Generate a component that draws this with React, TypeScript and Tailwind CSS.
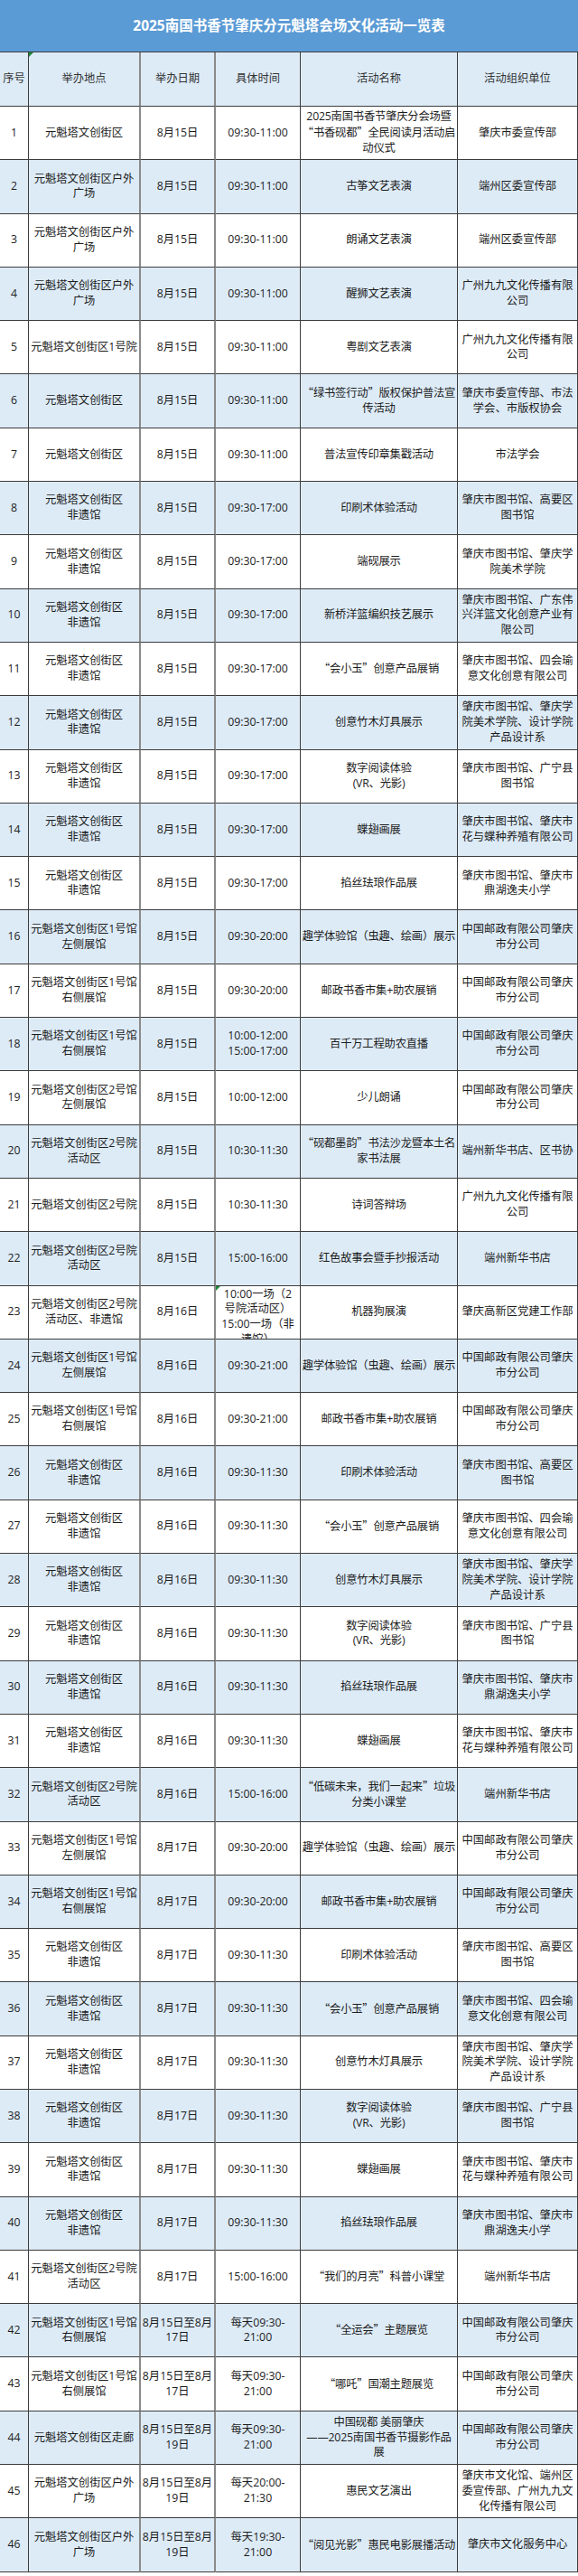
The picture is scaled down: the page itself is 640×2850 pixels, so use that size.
import React from 'react';

type Row = {
  place: string;
  date: string;
  time: string;
  name: string;
  org: string;
};

const FY = '非遗馆';
const ZQ_POST = '中国邮政有限公司肇庆\n市分公司';

const rows: Row[] = [
  { place: '元魁塔文创街区', date: '8月15日', time: '09:30-11:00', name: '2025南国书香节肇庆分会场暨\n“书香砚都”全民阅读月活动启\n动仪式', org: '肇庆市委宣传部' },
  { place: '元魁塔文创街区户外\n广场', date: '8月15日', time: '09:30-11:00', name: '古筝文艺表演', org: '端州区委宣传部' },
  { place: '元魁塔文创街区户外\n广场', date: '8月15日', time: '09:30-11:00', name: '朗诵文艺表演', org: '端州区委宣传部' },
  { place: '元魁塔文创街区户外\n广场', date: '8月15日', time: '09:30-11:00', name: '醒狮文艺表演', org: '广州九九文化传播有限\n公司' },
  { place: '元魁塔文创街区1号院', date: '8月15日', time: '09:30-11:00', name: '粤剧文艺表演', org: '广州九九文化传播有限\n公司' },
  { place: '元魁塔文创街区', date: '8月15日', time: '09:30-11:00', name: '“绿书签行动”版权保护普法宣\n传活动', org: '肇庆市委宣传部、市法\n学会、市版权协会' },
  { place: '元魁塔文创街区', date: '8月15日', time: '09:30-11:00', name: '普法宣传印章集戳活动', org: '市法学会' },
  { place: '元魁塔文创街区\n' + FY, date: '8月15日', time: '09:30-17:00', name: '印刷术体验活动', org: '肇庆市图书馆、高要区\n图书馆' },
  { place: '元魁塔文创街区\n' + FY, date: '8月15日', time: '09:30-17:00', name: '端砚展示', org: '肇庆市图书馆、肇庆学\n院美术学院' },
  { place: '元魁塔文创街区\n' + FY, date: '8月15日', time: '09:30-17:00', name: '新桥洋篮编织技艺展示', org: '肇庆市图书馆、广东伟\n兴洋篮文化创意产业有\n限公司' },
  { place: '元魁塔文创街区\n' + FY, date: '8月15日', time: '09:30-17:00', name: '“会小玉”创意产品展销', org: '肇庆市图书馆、四会瑜\n意文化创意有限公司' },
  { place: '元魁塔文创街区\n' + FY, date: '8月15日', time: '09:30-17:00', name: '创意竹木灯具展示', org: '肇庆市图书馆、肇庆学\n院美术学院、设计学院\n产品设计系' },
  { place: '元魁塔文创街区\n' + FY, date: '8月15日', time: '09:30-17:00', name: '数字阅读体验\n(VR、光影)', org: '肇庆市图书馆、广宁县\n图书馆' },
  { place: '元魁塔文创街区\n' + FY, date: '8月15日', time: '09:30-17:00', name: '蝶翅画展', org: '肇庆市图书馆、肇庆市\n花与蝶种养殖有限公司' },
  { place: '元魁塔文创街区\n' + FY, date: '8月15日', time: '09:30-17:00', name: '掐丝珐琅作品展', org: '肇庆市图书馆、肇庆市\n鼎湖逸夫小学' },
  { place: '元魁塔文创街区1号馆\n左侧展馆', date: '8月15日', time: '09:30-20:00', name: '趣学体验馆（虫趣、绘画）展示', org: ZQ_POST },
  { place: '元魁塔文创街区1号馆\n右侧展馆', date: '8月15日', time: '09:30-20:00', name: '邮政书香市集+助农展销', org: ZQ_POST },
  { place: '元魁塔文创街区1号馆\n右侧展馆', date: '8月15日', time: '10:00-12:00\n15:00-17:00', name: '百千万工程助农直播', org: ZQ_POST },
  { place: '元魁塔文创街区2号馆\n左侧展馆', date: '8月15日', time: '10:00-12:00', name: '少儿朗诵', org: ZQ_POST },
  { place: '元魁塔文创街区2号院\n活动区', date: '8月15日', time: '10:30-11:30', name: '“砚都墨韵”书法沙龙暨本土名\n家书法展', org: '端州新华书店、区书协' },
  { place: '元魁塔文创街区2号院', date: '8月15日', time: '10:30-11:30', name: '诗词答辩场', org: '广州九九文化传播有限\n公司' },
  { place: '元魁塔文创街区2号院\n活动区', date: '8月15日', time: '15:00-16:00', name: '红色故事会暨手抄报活动', org: '端州新华书店' },
  { place: '元魁塔文创街区2号院\n活动区、非遗馆', date: '8月16日', time: '10:00一场（2\n号院活动区）\n15:00一场（非\n遗馆）', name: '机器狗展演', org: '肇庆高新区党建工作部' },
  { place: '元魁塔文创街区1号馆\n左侧展馆', date: '8月16日', time: '09:30-21:00', name: '趣学体验馆（虫趣、绘画）展示', org: ZQ_POST },
  { place: '元魁塔文创街区1号馆\n右侧展馆', date: '8月16日', time: '09:30-21:00', name: '邮政书香市集+助农展销', org: ZQ_POST },
  { place: '元魁塔文创街区\n' + FY, date: '8月16日', time: '09:30-11:30', name: '印刷术体验活动', org: '肇庆市图书馆、高要区\n图书馆' },
  { place: '元魁塔文创街区\n' + FY, date: '8月16日', time: '09:30-11:30', name: '“会小玉”创意产品展销', org: '肇庆市图书馆、四会瑜\n意文化创意有限公司' },
  { place: '元魁塔文创街区\n' + FY, date: '8月16日', time: '09:30-11:30', name: '创意竹木灯具展示', org: '肇庆市图书馆、肇庆学\n院美术学院、设计学院\n产品设计系' },
  { place: '元魁塔文创街区\n' + FY, date: '8月16日', time: '09:30-11:30', name: '数字阅读体验\n(VR、光影)', org: '肇庆市图书馆、广宁县\n图书馆' },
  { place: '元魁塔文创街区\n' + FY, date: '8月16日', time: '09:30-11:30', name: '掐丝珐琅作品展', org: '肇庆市图书馆、肇庆市\n鼎湖逸夫小学' },
  { place: '元魁塔文创街区\n' + FY, date: '8月16日', time: '09:30-11:30', name: '蝶翅画展', org: '肇庆市图书馆、肇庆市\n花与蝶种养殖有限公司' },
  { place: '元魁塔文创街区2号院\n活动区', date: '8月16日', time: '15:00-16:00', name: '“低碳未来，我们一起来”垃圾\n分类小课堂', org: '端州新华书店' },
  { place: '元魁塔文创街区1号馆\n左侧展馆', date: '8月17日', time: '09:30-20:00', name: '趣学体验馆（虫趣、绘画）展示', org: ZQ_POST },
  { place: '元魁塔文创街区1号馆\n右侧展馆', date: '8月17日', time: '09:30-20:00', name: '邮政书香市集+助农展销', org: ZQ_POST },
  { place: '元魁塔文创街区\n' + FY, date: '8月17日', time: '09:30-11:30', name: '印刷术体验活动', org: '肇庆市图书馆、高要区\n图书馆' },
  { place: '元魁塔文创街区\n' + FY, date: '8月17日', time: '09:30-11:30', name: '“会小玉”创意产品展销', org: '肇庆市图书馆、四会瑜\n意文化创意有限公司' },
  { place: '元魁塔文创街区\n' + FY, date: '8月17日', time: '09:30-11:30', name: '创意竹木灯具展示', org: '肇庆市图书馆、肇庆学\n院美术学院、设计学院\n产品设计系' },
  { place: '元魁塔文创街区\n' + FY, date: '8月17日', time: '09:30-11:30', name: '数字阅读体验\n(VR、光影)', org: '肇庆市图书馆、广宁县\n图书馆' },
  { place: '元魁塔文创街区\n' + FY, date: '8月17日', time: '09:30-11:30', name: '蝶翅画展', org: '肇庆市图书馆、肇庆市\n花与蝶种养殖有限公司' },
  { place: '元魁塔文创街区\n' + FY, date: '8月17日', time: '09:30-11:30', name: '掐丝珐琅作品展', org: '肇庆市图书馆、肇庆市\n鼎湖逸夫小学' },
  { place: '元魁塔文创街区2号院\n活动区', date: '8月17日', time: '15:00-16:00', name: '“我们的月亮”科普小课堂', org: '端州新华书店' },
  { place: '元魁塔文创街区1号馆\n右侧展馆', date: '8月15日至8月\n17日', time: '每天09:30-\n21:00', name: '“全运会”主题展览', org: ZQ_POST },
  { place: '元魁塔文创街区1号馆\n右侧展馆', date: '8月15日至8月\n17日', time: '每天09:30-\n21:00', name: '“哪吒”国潮主题展览', org: ZQ_POST },
  { place: '元魁塔文创街区走廊', date: '8月15日至8月\n19日', time: '每天09:30-\n21:00', name: '中国砚都 美丽肇庆\n——2025南国书香节摄影作品\n展', org: ZQ_POST },
  { place: '元魁塔文创街区户外\n广场', date: '8月15日至8月\n19日', time: '每天20:00-\n21:30', name: '惠民文艺演出', org: '肇庆市文化馆、端州区\n委宣传部、广州九九文\n化传播有限公司' },
  { place: '元魁塔文创街区户外\n广场', date: '8月15日至8月\n19日', time: '每天19:30-\n21:00', name: '“阅见光影”惠民电影展播活动', org: '肇庆市文化服务中心' },
];

// curly quotes come out full width in the CJK face, as in the sheet
function Txt({ s }: { s: string }) {
  const parts = s.split(/([“”])/);
  return (
    <span className="tracking-[-0.2px]">
      {parts.map((p, i) =>
        p === '“' || p === '”' ? (
          <span key={i} className="font-['Noto_Sans_CJK_SC',sans-serif]">{p}</span>
        ) : (
          <React.Fragment key={i}>{p}</React.Fragment>
        )
      )}
    </span>
  );
}

function Mark() {
  return (
    <span className="absolute left-0 top-0 h-0 w-0 border-t-[5px] border-r-[5px] border-t-[#1f8a3a] border-r-transparent" />
  );
}

const base =
  'relative flex items-center justify-center text-center whitespace-pre border-b border-[#3c3c3c]';
const thin = 'border-r border-r-[#3c3c3c]';
const thick = 'border-r-2 border-r-[#8a8a8a]';

export default function App() {
  return (
    <div className="w-[640px] bg-white font-['Open_Sans','Noto_Sans_CJK_SC',sans-serif] text-[12.3px] leading-[16.8px] text-[#1c1c1c]">
      {/* title */}
      <div className="flex h-[58px] items-center justify-center border-b border-[#3c3c3c] bg-[#5b9bd5] text-[15.5px] font-bold text-white">
        2025南国书香节肇庆分元魁塔会场文化活动一览表
      </div>

      {/* header */}
      <div className="grid h-[60px] grid-cols-[32px_124px_83px_94px_174px_133px] bg-[#ddebf7] text-[#333]">
        <div className={`${base} ${thin}`}>序号</div>
        <div className={`${base} ${thick}`}>
          <Mark />
          <span>举办地点</span>
        </div>
        <div className={`${base} ${thick}`}>举办日期</div>
        <div className={`${base} ${thin}`}>具体时间</div>
        <div className={`${base} ${thin}`}>活动名称</div>
        <div className={`${base} ${thin}`}>活动组织单位</div>
      </div>

      {rows.map((r, i) => {
        const odd = i % 2 === 1;
        const clipped = i === 22;
        return (
          <div
            key={i}
            className={`grid h-[59.3px] grid-cols-[32px_124px_83px_94px_174px_133px] ${odd ? 'bg-[#ddebf7]' : 'bg-white'}`}
          >
            <div className={`${base} ${thin}`}>{i + 1}</div>
            <div className={`${base} ${thick}`}>{r.place}</div>
            <div className={`${base} ${thick}`}>{r.date}</div>
            {clipped ? (
              <div className={`relative overflow-hidden whitespace-pre border-b border-[#3c3c3c] pt-px text-center ${thin}`}>
                <Mark />
                {r.time}
              </div>
            ) : (
              <div className={`${base} ${thin}`}>{r.time}</div>
            )}
            <div className={`${base} ${thin}`}>
              <Txt s={r.name} />
            </div>
            <div className={`${base} ${thin}`}>{r.org}</div>
          </div>
        );
      })}
    </div>
  );
}
